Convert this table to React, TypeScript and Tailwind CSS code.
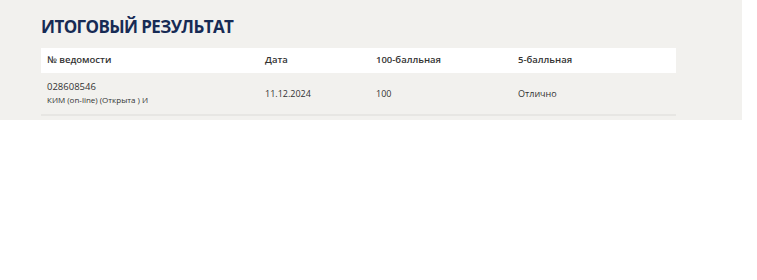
import React from "react";

const rows = [
  {
    num: "028608546",
    kind: "КИМ (on-line) (Открыта ) И",
    date: "11.12.2024",
    score100: "100",
    score5: "Отлично",
  },
];

export default function App() {
  return (
    <div className="w-[757px] h-[280px] bg-white font-['Open_Sans',sans-serif]">
      <div className="w-[742px] h-[120px] bg-[#f2f1ee] pl-[41px] pt-[15px]">
        <h1 className="text-[17px] leading-[24px] font-bold text-[#172b55] tracking-[-0.6px]">
          ИТОГОВЫЙ РЕЗУЛЬТАТ
        </h1>
        <table className="mt-[9px] w-[635px] table-fixed border-collapse text-left">
          <thead>
            <tr className="bg-white h-[25px] text-[9.5px] text-[#333]">
              <th className="pl-[6px] w-[224px] font-semibold">№ ведомости</th>
              <th className="w-[111px] font-semibold">Дата</th>
              <th className="w-[142px] font-semibold">100-балльная</th>
              <th className="font-semibold">5-балльная</th>
            </tr>
          </thead>
          <tbody>
            {rows.map((r) => (
              <tr
                key={r.num}
                className="h-[42px] border-b-2 border-[#e7e6e3] text-[9px] text-[#333]"
              >
                <td className="pl-[6px] pb-[1px]">
                  <div className="text-[9.5px] leading-[14px]">{r.num}</div>
                  <div className="text-[8px] leading-[12px]">{r.kind}</div>
                </td>
                <td>{r.date}</td>
                <td>{r.score100}</td>
                <td>{r.score5}</td>
              </tr>
            ))}
          </tbody>
        </table>
      </div>
    </div>
  );
}
